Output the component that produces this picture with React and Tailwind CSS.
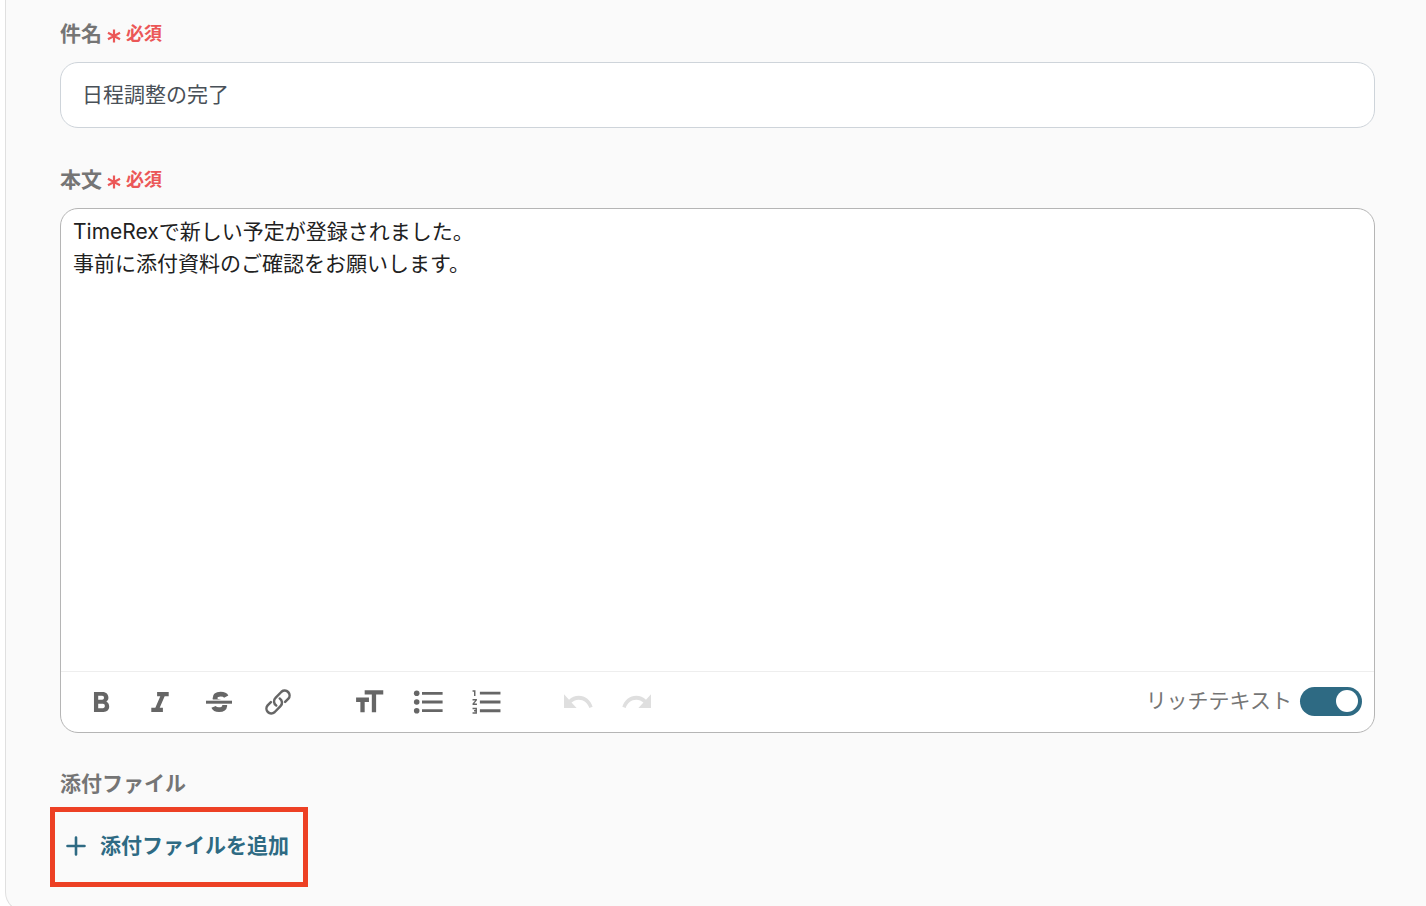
import { useState } from "react";

function Icon({ children, className = "" }) {
  return (
    <svg viewBox="0 0 32 32" className={`size-8 ${className}`} fill="currentColor" aria-hidden="true">
      {children}
    </svg>
  );
}

const icons = {
  bold: (
    <Icon>
      <path
        transform="translate(-0.9 0.28) scale(1.41 1.43)"
        d="M15.8 10.7c.9-.67 1.45-1.6 1.45-2.7 0-2.4-1.6-4-4.1-4H7v14h6.8c2.5 0 4-1.6 4-3.8 0-1.6-.7-2.8-2-3.5zM10 6.7h2.8c.8 0 1.3.5 1.3 1.35s-.5 1.35-1.3 1.35H10V6.7zm3.3 8.6H10v-3h3.3c.9 0 1.4.6 1.4 1.5s-.5 1.5-1.4 1.5z"
      />
    </Icon>
  ),
  italic: (
    <Icon>
      <path
        transform="translate(-1.4 0.28) scale(1.45 1.43)"
        d="M10 4v3h2.21l-3.42 8H6v3h8v-3h-2.21l3.42-8H18V4z"
      />
    </Icon>
  ),
  strike: (
    <Icon>
      <defs>
        <clipPath id="strike-halves">
          <path d="M0 0h32v13.6H0zM0 18.9h32V32H0z" />
        </clipPath>
      </defs>
      <path
        clipPath="url(#strike-halves)"
        d="M23.2 10.6C22.4 9 20.2 8.2 17.6 8.2c-3.6 0-5.6 1.6-5.6 4.2 0 5 10.4 2.2 9.8 7.4-.3 2.7-2.6 3.9-5.8 3.9-2.8 0-4.6-.9-5.4-2.8"
        fill="none"
        stroke="currentColor"
        strokeWidth="4.8"
      />
      <path d="M3 14.7h26v3H3z" />
    </Icon>
  ),
  link: (
    <Icon>
      <path
        transform="translate(1 1) scale(1.25)"
        fill="none"
        stroke="currentColor"
        strokeWidth="2"
        strokeLinecap="round"
        strokeLinejoin="round"
        d="M13.4 9.2a3.9 3.9 0 0 1 .6 6.1l-4.8 4.9a3.9 3.9 0 0 1-5.5-5.5l2.6-2.6M10.6 14.8a3.9 3.9 0 0 1-.6-6.1l4.8-4.9a3.9 3.9 0 0 1 5.5 5.5l-2.6 2.6"
      />
    </Icon>
  ),
  size: (
    <Icon>
      <path
        transform="translate(-1.2 -1.6) scale(1.43 1.46)"
        d="M9 4v3h5v12h3V7h5V4H9zm-6 8h3v7h3v-7h3V9H3v3z"
      />
    </Icon>
  ),
  bullets: (
    <Icon>
      <circle cx="4.7" cy="7.3" r="2.8" />
      <circle cx="4.7" cy="16" r="2.8" />
      <circle cx="4.7" cy="24.7" r="2.8" />
      <path d="M10 5.9h20.6v2.8H10zM10 14.6h20.6v2.8H10zM10 23.3h20.6v2.8H10z" />
    </Icon>
  ),
  numbers: (
    <Icon>
      <path
        transform="translate(-1.4 -1.7) scale(1.47)"
        d="M2 17h2v.5H3v1h1v.5H2v1h3v-4H2v1zm1-9h1V4H2v1h1v3zm-1 3h1.8L2 13.1v.9h3v-1H3.2L5 10.9V10H2v1zm5-6v2h14V5H7zm0 14h14v-2H7v2zm0-6h14v-2H7v2z"
      />
    </Icon>
  ),
  undo: (
    <Icon>
      <path
        transform="translate(-0.8 -2.3) scale(1.4 1.52)"
        d="M12.5 8c-2.65 0-5.05.99-6.9 2.6L2 7v9h9l-3.62-3.62c1.39-1.16 3.16-1.88 5.12-1.88 3.54 0 6.55 2.31 7.6 5.5l2.37-.78C21.08 11.03 17.15 8 12.5 8z"
      />
    </Icon>
  ),
  redo: (
    <Icon className="-scale-x-100">
      <path
        transform="translate(-0.8 -2.3) scale(1.4 1.52)"
        d="M12.5 8c-2.65 0-5.05.99-6.9 2.6L2 7v9h9l-3.62-3.62c1.39-1.16 3.16-1.88 5.12-1.88 3.54 0 6.55 2.31 7.6 5.5l2.37-.78C21.08 11.03 17.15 8 12.5 8z"
      />
    </Icon>
  ),
};

const groups = [
  [
    ["bold", "太字"],
    ["italic", "斜体"],
    ["strike", "取り消し線"],
    ["link", "リンク"],
  ],
  [
    ["size", "文字サイズ"],
    ["bullets", "箇条書き"],
    ["numbers", "番号付きリスト"],
  ],
  [
    ["undo", "元に戻す"],
    ["redo", "やり直す"],
  ],
];

function Required() {
  return (
    <span className="flex items-center gap-[3px] text-lg leading-8 text-[#eb5757]">
      <svg viewBox="0 0 18 18" className="mt-1 size-[18px]" fill="none" stroke="currentColor" strokeWidth="2.2" aria-hidden="true">
        <path d="M9 2.4v13.2M3 5.7l12 6.6M15 5.7L3 12.3" />
      </svg>
      <span>必須</span>
    </span>
  );
}

export default function App() {
  const [subject, setSubject] = useState("日程調整の完了");
  const [rich, setRich] = useState(true);

  return (
    <div className="bg-white pl-[5px] font-['Inter','Noto_Sans_CJK_JP',sans-serif]">
      <main className="rounded-bl-[20px] border-b border-l border-[#e0e0e0] bg-[#fafafa] pt-[18px] pr-[51px] pb-6 pl-[54px] text-[21px] leading-8">
        <label htmlFor="subject" className="flex items-center gap-[3px] font-bold text-[#757575]">
          <span>件名</span>
          <Required />
        </label>
        <input
          id="subject"
          type="text"
          value={subject}
          onChange={(e) => setSubject(e.target.value)}
          className="mt-3 block h-[66px] w-full rounded-[18px] border border-[#ced4da] bg-white px-[21px] pb-1 text-[#495057] outline-none"
        />

        <div id="body-label" className="mt-9 flex items-center gap-[3px] font-bold text-[#757575]">
          <span>本文</span>
          <Required />
        </div>
        <div className="mt-3 rounded-[18px] border border-[#b5b5b5] bg-white">
          <div
            role="textbox"
            aria-multiline="true"
            aria-labelledby="body-label"
            contentEditable
            suppressContentEditableWarning
            className="min-h-[462px] px-3 py-[7px] text-[#212121] outline-none"
          >
            <p>TimeRexで新しい予定が登録されました。</p>
            <p>事前に添付資料のご確認をお願いします。</p>
          </div>
          <div className="flex h-[61px] items-center justify-between border-t border-[#eeeeee] pr-3 pl-6">
            <div className="flex items-center gap-[59px]">
              {groups.map((group, i) => (
                <div key={i} className="flex items-center gap-[27px]">
                  {group.map(([name, label]) => (
                    <button
                      key={name}
                      type="button"
                      aria-label={label}
                      disabled={i === 2}
                      className="text-[#666666] disabled:text-[#dfdfdf]"
                    >
                      {icons[name]}
                    </button>
                  ))}
                </div>
              ))}
            </div>
            <label className="flex items-center gap-2 pb-[2px] text-[#757575]">
              <span>リッチテキスト</span>
              <input
                type="checkbox"
                role="switch"
                checked={rich}
                onChange={(e) => setRich(e.target.checked)}
                className="flex h-[29px] w-[62px] appearance-none items-center rounded-full bg-[#bdbdbd] px-1 before:size-[22px] before:rounded-full before:bg-white checked:justify-end checked:bg-[#2e6a83]"
              />
            </label>
          </div>
        </div>

        <h2 className="mt-[35px] font-bold text-[#757575]">添付ファイル</h2>
        <div className="mt-[7px] -ml-[10px] flex h-20 w-[258px] items-center border-[5px] border-[#ed4024] pb-[2px] pl-[9px]">
          <button type="button" className="flex items-center gap-3 font-bold text-[#2e6a83]">
            <svg viewBox="0 0 24 24" className="size-6" fill="none" stroke="currentColor" strokeWidth="2.6" strokeLinecap="round" aria-hidden="true">
              <path d="M12 3.5v17M3.5 12h17" />
            </svg>
            <span>添付ファイルを追加</span>
          </button>
        </div>
      </main>
    </div>
  );
}
